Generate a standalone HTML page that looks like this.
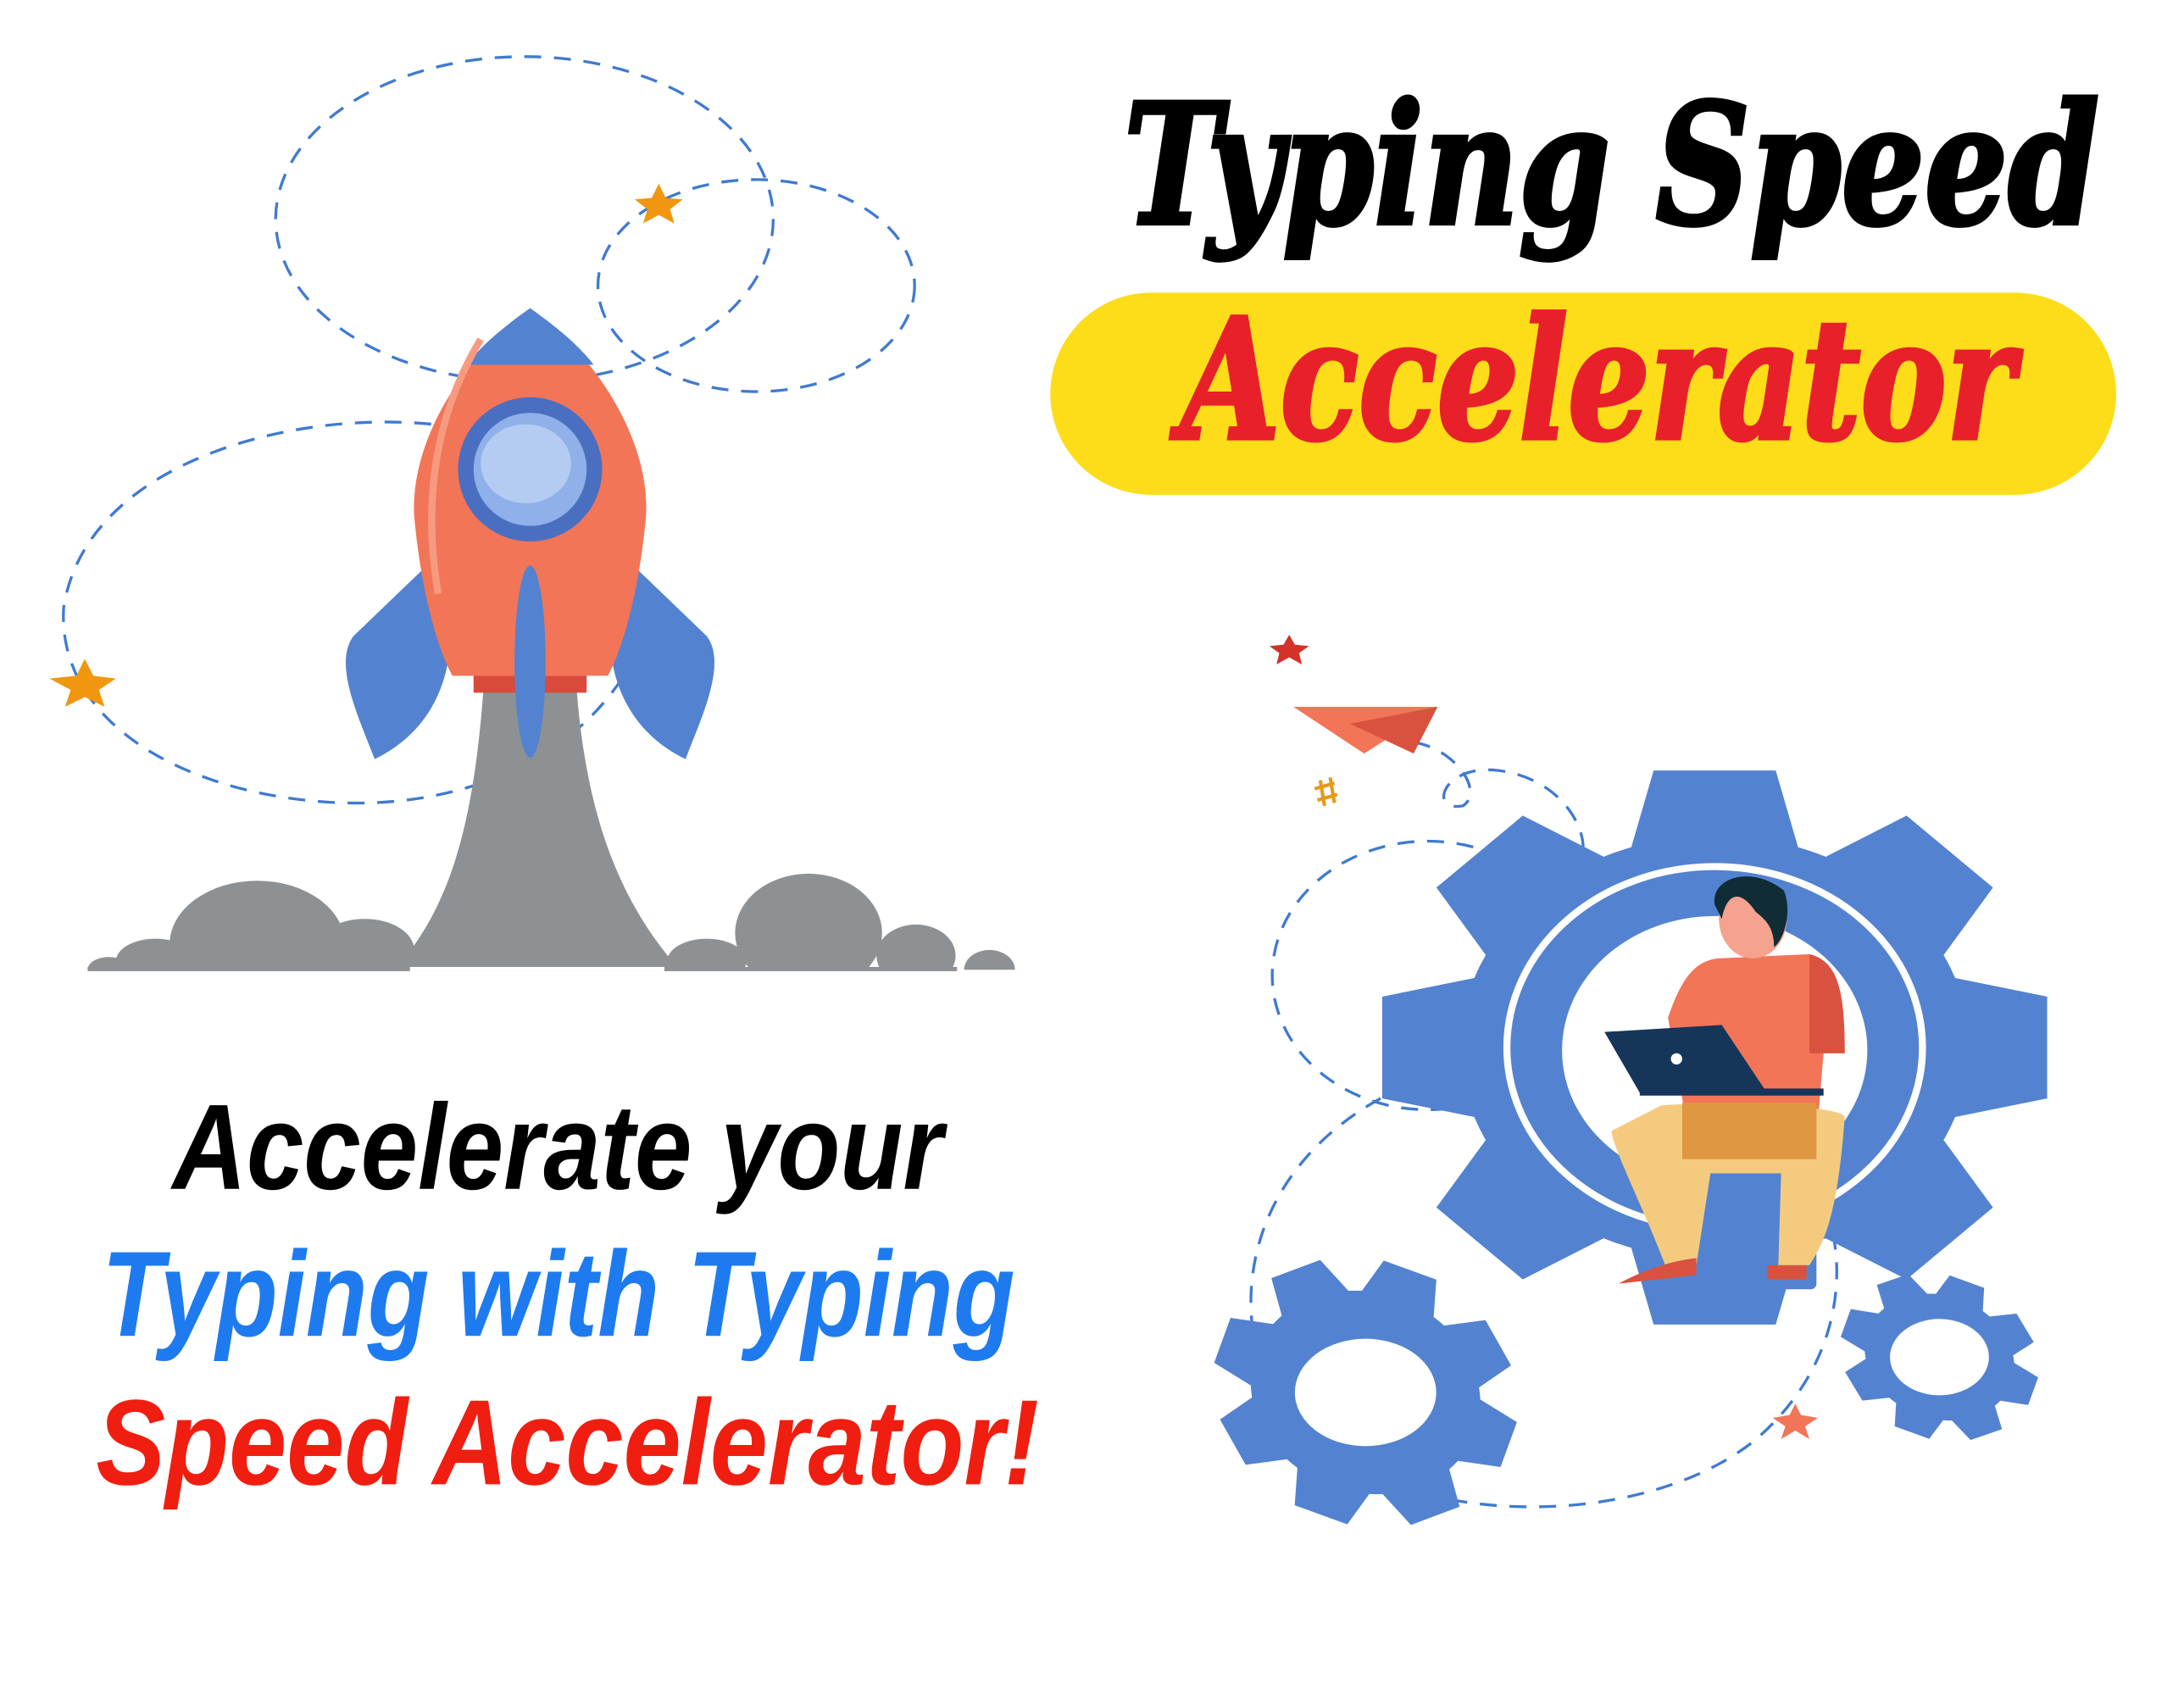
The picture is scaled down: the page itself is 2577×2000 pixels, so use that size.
<!DOCTYPE html>
<html><head><meta charset="utf-8"><style>
html,body{margin:0;padding:0;background:#fff;width:2577px;height:2000px;overflow:hidden}
svg{display:block}
</style></head><body>
<svg width="2577" height="2000" viewBox="0 0 1545 1199" xmlns="http://www.w3.org/2000/svg">
<defs>
<clipPath id="ground"><rect x="0" y="0" width="1545" height="686"/></clipPath>
<g id="gear">
<polygon points="-52,-130 -36,-196 36,-196 52,-130"/>
<polygon points="-52,-130 -36,-196 36,-196 52,-130" transform="rotate(45)"/>
<polygon points="-52,-130 -36,-196 36,-196 52,-130" transform="rotate(90)"/>
<polygon points="-52,-130 -36,-196 36,-196 52,-130" transform="rotate(135)"/>
<polygon points="-52,-130 -36,-196 36,-196 52,-130" transform="rotate(180)"/>
<polygon points="-52,-130 -36,-196 36,-196 52,-130" transform="rotate(225)"/>
<polygon points="-52,-130 -36,-196 36,-196 52,-130" transform="rotate(270)"/>
<polygon points="-52,-130 -36,-196 36,-196 52,-130" transform="rotate(315)"/>
<circle r="150"/>
</g>
</defs>
<rect width="1545" height="1199" fill="#fff"/>
<g fill="none" stroke="#3f7ad0" stroke-width="2" stroke-dasharray="12 9">
<ellipse cx="371" cy="155" rx="176" ry="115"/>
<ellipse cx="535" cy="202" rx="112" ry="75"/>
<path d="M305 300 C200 290 60 330 45 430 C40 520 150 570 260 568 C330 566 400 540 440 480"/>
<ellipse cx="1010" cy="690" rx="110" ry="95"/>
<path d="M1015 760 C900 800 860 900 900 990 C960 1080 1150 1090 1240 1020 C1300 970 1310 900 1290 850"/>
<path d="M1000 525 C1030 530 1050 560 1035 570 C1010 575 1020 540 1060 545 C1100 550 1120 580 1120 600"/>
</g>
<polygon points="466,130 471,140 483,141 474,148 477,158 466,152 455,158 458,148 449,141 461,140" fill="#f0960f"/>
<polygon points="60,466 66,478 82,480 70,488 74,500 60,493 46,500 50,488 35,480 54,478" fill="#f0960f"/>
<polygon points="912,449 916,456 926,457 919,462 921,470 912,465 903,470 905,462 898,457 908,456" fill="#d2322a"/>
<polygon points="1270,993 1274,1001 1286,1003 1277,1009 1280,1018 1270,1012 1260,1018 1263,1009 1254,1003 1266,1001" fill="#f27558"/>
<g stroke="#e59a1a" stroke-width="2.5"><path d="M930 558 L944 554 M932 566 L946 562 M934 552 L937 570 M941 550 L944 568"/></g>
<polygon points="915,500 1017,500 965,533" fill="#f27558"/>
<polygon points="955,512 1017,500 1000,533" fill="#d9523f"/>
<path d="M342 488 L408 488 C415 580 440 640 480 685 L280 685 C320 640 335 580 342 488Z" fill="#8e9194"/>
<g fill="#8e9194" clip-path="url(#ground)">
<ellipse cx="182" cy="668" rx="62" ry="45"/><ellipse cx="258" cy="672" rx="35" ry="22"/><ellipse cx="110" cy="680" rx="28" ry="16"/>
<ellipse cx="77" cy="686" rx="15" ry="9"/><ellipse cx="572" cy="660" rx="52" ry="42"/><ellipse cx="648" cy="676" rx="28" ry="22"/>
<ellipse cx="500" cy="680" rx="28" ry="16"/><ellipse cx="700" cy="686" rx="18" ry="14"/>
</g>
<rect x="62" y="684" width="615" height="3" fill="#8e9194"/>
<rect x="290" y="684" width="180" height="3" fill="#fff"/>
<path d="M302 400 L250 450 C235 470 255 510 265 537 C300 520 315 490 318 460Z" fill="#5383d0"/>
<path d="M448 400 L500 450 C515 470 495 510 485 537 C450 520 435 490 432 460Z" fill="#5383d0"/>
<path d="M375 218 C420 250 460 310 457 365 C452 420 440 460 430 478 L320 478 C310 460 298 420 293 365 C290 310 330 250 375 218Z" fill="#f27558"/>
<path d="M375 218 C395 232 410 245 420 258 L330 258 C340 245 355 232 375 218Z" fill="#5383d0"/>
<path d="M340 240 C310 290 298 350 310 420" stroke="#f79a80" stroke-width="5" fill="none"/>
<rect x="335" y="478" width="80" height="12" fill="#d84a3c"/>
<ellipse cx="375" cy="468" rx="11" ry="68" fill="#5383d0"/>
<circle cx="375" cy="332" r="51" fill="#4a6fc0"/>
<circle cx="375" cy="332" r="40" fill="#8fb0e8"/>
<ellipse cx="372" cy="328" rx="32" ry="28" fill="#b4cbf2"/>
<g fill="#5383d0">
<use href="#gear" transform="translate(1213,741) scale(1.2,1)"/>
<use href="#gear" transform="translate(966,985) rotate(20) scale(0.55,0.47)"/>
<use href="#gear" transform="translate(1372,960) rotate(20) scale(0.36,0.29)"/>
</g>
<ellipse cx="966" cy="985" rx="50" ry="38" fill="#fff"/>
<ellipse cx="1372" cy="960" rx="35" ry="27" fill="#fff"/>
<ellipse cx="1213" cy="741" rx="147" ry="128" fill="none" stroke="#fff" stroke-width="5"/>
<ellipse cx="1213" cy="743" rx="108" ry="95" fill="#fff"/>
<rect x="1200" y="830" width="85" height="82" rx="4" fill="#5383d0"/>
<path d="M1180 720 C1190 690 1200 680 1215 678 L1280 675 C1300 680 1305 700 1305 745 L1290 745 L1285 805 L1195 805Z" fill="#f27558"/>
<path d="M1280 675 C1300 680 1305 700 1305 745 L1280 745 C1280 710 1280 690 1280 675Z" fill="#d9523f"/>
<path d="M1175 782 C1190 780 1300 780 1305 790 C1300 860 1290 880 1280 895 L1258 895 L1260 830 L1210 830 L1200 895 L1178 895 C1165 860 1140 810 1140 800Z" fill="#f4cb7e"/>
<rect x="1190" y="780" width="95" height="40" fill="#e09741"/>
<path d="M1145 908 C1160 900 1180 892 1200 890 L1200 902 Z" fill="#d9523f"/>
<path d="M1250 895 L1278 895 L1278 905 L1250 905Z" fill="#d9523f"/>
<path d="M1135 730 L1218 725 L1248 770 L1160 773Z" fill="#16355a"/>
<rect x="1160" y="770" width="130" height="5" fill="#16355a"/>
<circle cx="1186" cy="749" r="4" fill="#fff"/>
<ellipse cx="1240" cy="650" rx="24" ry="28" fill="#f5a28e"/>
<path d="M1213 640 C1210 620 1240 612 1262 630 C1268 645 1262 665 1255 670 C1255 655 1248 650 1242 645 C1232 630 1222 630 1218 650Z" fill="#102c35"/>
<text x="795" y="158" font-family="'DejaVu Serif', 'Liberation Serif', serif" font-weight="bold" font-style="italic" font-size="118" textLength="690" lengthAdjust="spacingAndGlyphs" fill="#000" stroke="#000" stroke-width="3">Typing Speed</text>
<rect x="743" y="207" width="754" height="143" rx="71.5" fill="#fddc1a"/>
<text x="835" y="310" font-family="'DejaVu Serif', 'Liberation Serif', serif" font-weight="bold" font-style="italic" font-size="118" textLength="590" lengthAdjust="spacingAndGlyphs" fill="#e8202a" stroke="#e8202a" stroke-width="3">Accelerator</text>
<g font-family="'Liberation Sans', sans-serif" font-weight="bold" font-style="italic" font-size="86">
<text x="122" y="841" textLength="545" lengthAdjust="spacingAndGlyphs" fill="#000">Accelerate your</text>
<text x="72" y="945" textLength="646" lengthAdjust="spacingAndGlyphs" fill="#1e7bef">Typing with Typing</text>
<text x="68" y="1050" textLength="667" lengthAdjust="spacingAndGlyphs" fill="#f01e10">Speed Accelerator!</text>
</g>
</svg>
</body></html>
